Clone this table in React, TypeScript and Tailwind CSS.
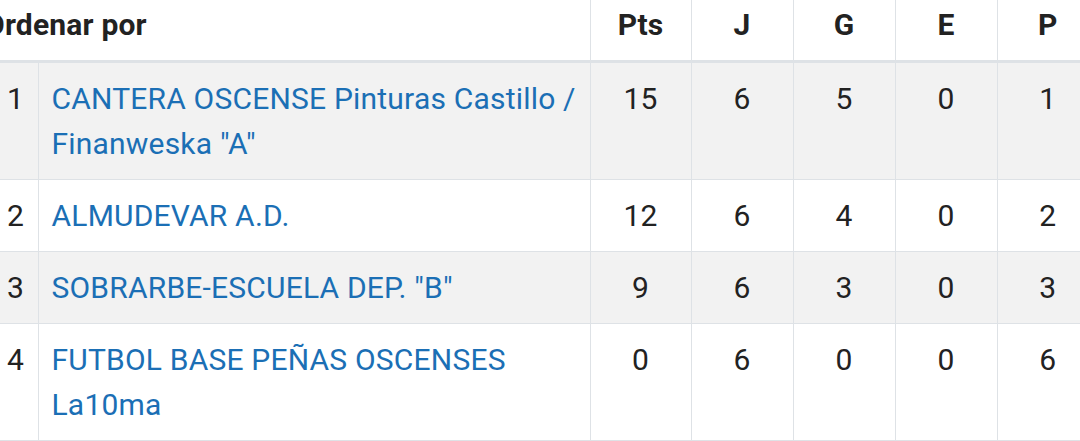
import React from 'react'

type Row = { pos: number; team: string; pts: number; j: number; g: number; e: number; p: number }

const ROWS: Row[] = [
  { pos: 1, team: 'CANTERA OSCENSE Pinturas Castillo / Finanweska "A"', pts: 15, j: 6, g: 5, e: 0, p: 1 },
  { pos: 2, team: 'ALMUDEVAR A.D.', pts: 12, j: 6, g: 4, e: 0, p: 2 },
  { pos: 3, team: 'SOBRARBE-ESCUELA DEP. "B"', pts: 9, j: 6, g: 3, e: 0, p: 3 },
  { pos: 4, team: 'FUTBOL BASE PEÑAS OSCENSES La10ma', pts: 0, j: 6, g: 0, e: 0, p: 6 },
]

const HEADS = ['Pts', 'J', 'G', 'E', 'P']

export default function App() {
  return (
    <div
      className="w-[1080px] h-[441px] overflow-hidden bg-white text-[#222] text-[30px] leading-[45px] tracking-[0.2px]"
      style={{ fontFamily: 'Roboto, "Noto Sans", sans-serif' }}
    >
      <table className="border-collapse table-fixed w-[1098px]">
        <colgroup>
          <col className="w-[38px]" />
          <col className="w-[552px]" />
          <col className="w-[101px]" />
          <col className="w-[102px]" />
          <col className="w-[102px]" />
          <col className="w-[102px]" />
          <col className="w-[101px]" />
        </colgroup>
        <thead>
          <tr className="border-b-[3px] border-[#dee2e6]">
            <th colSpan={2} className="text-left font-bold pt-[2px] pb-[13px] pl-0 whitespace-nowrap">
              <span className="inline-block -ml-[16px]">Ordenar por</span>
            </th>
            {HEADS.map((h) => (
              <th key={h} className="font-bold text-center border-l border-[#dee2e6] pt-[2px] pb-[13px]">
                {h}
              </th>
            ))}
          </tr>
        </thead>
        <tbody>
          {ROWS.map((r, i) => (
            <tr key={r.pos} className={`border-b border-[#dee2e6] ${i % 2 === 0 ? 'bg-[#f2f2f2]' : 'bg-white'}`}>
              <td className="align-top pl-[7px] py-[13px]">{r.pos}</td>
              <td className="align-top border-l border-[#dee2e6] pl-[13px] pr-3 py-[13px]">
                <a href="#" className="text-[#1b6fb5]">{r.team}</a>
              </td>
              {[r.pts, r.j, r.g, r.e, r.p].map((v, k) => (
                <td key={k} className="align-top text-center border-l border-[#dee2e6] py-[13px]">
                  {v}
                </td>
              ))}
            </tr>
          ))}
        </tbody>
      </table>
    </div>
  )
}
